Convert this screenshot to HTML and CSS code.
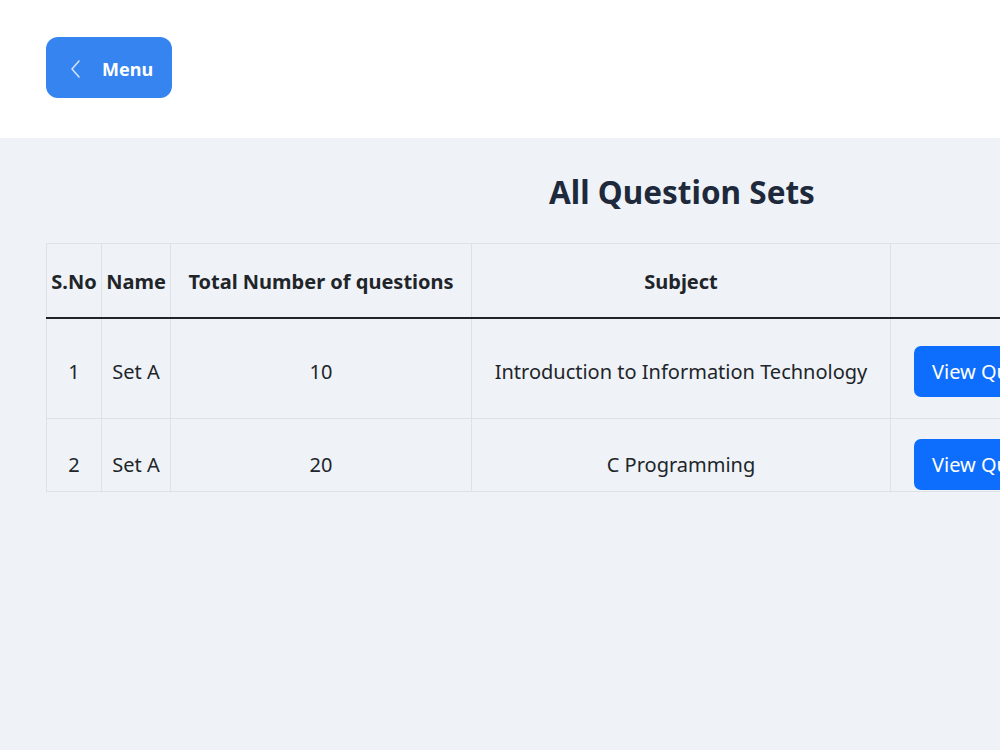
FILE: index.html
```html
<!DOCTYPE html>
<html lang="en">
<head>
    <meta charset="UTF-8">
    <meta name="viewport" content="width=device-width, initial-scale=1.0">
    <title>All Question Sets</title>
    <link rel="stylesheet" href="styles.css">
</head>
<body>
    <header class="topbar">
        <button class="menu-btn">
            <svg class="menu-icon" width="12" height="20" viewBox="0 0 12 20" fill="none">
                <path d="M9 2 L2 10 L9 18" stroke="currentColor" stroke-width="1.6" stroke-linecap="round" stroke-linejoin="round"/>
            </svg>
            <span>Menu</span>
        </button>
    </header>

    <main class="content">
        <h1 class="page-title">All Question Sets</h1>

        <table class="sets-table">
            <colgroup>
                <col class="col-sno">
                <col class="col-name">
                <col class="col-total">
                <col class="col-subject">
                <col class="col-actions">
            </colgroup>
            <thead>
                <tr>
                    <th>S.No</th>
                    <th>Name</th>
                    <th>Total Number of questions</th>
                    <th>Subject</th>
                    <th></th>
                </tr>
            </thead>
            <tbody>
                <tr class="row-tall">
                    <td>1</td>
                    <td>Set A</td>
                    <td>10</td>
                    <td>Introduction to Information Technology</td>
                    <td class="actions"><button class="view-btn">View Questions</button></td>
                </tr>
                <tr>
                    <td>2</td>
                    <td>Set A</td>
                    <td>20</td>
                    <td>C Programming</td>
                    <td class="actions"><button class="view-btn">View Questions</button></td>
                </tr>
            </tbody>
        </table>
    </main>
</body>
</html>
```

FILE: styles.css
```css
html {
    overflow-x: hidden;
}
body {
    margin: 0;
    font-family: "Noto Sans", "Open Sans", sans-serif;
    background-color: #eff3f8;
    color: #212529;
    min-height: 100vh;
}
.topbar {
    background-color: #fff;
    height: 138px;
    padding: 37px 46px 0;
    box-sizing: border-box;
}
.menu-btn {
    display: flex;
    align-items: center;
    gap: 20px;
    height: 61px;
    width: 126px;
    padding: 3px 0 0 24px;
    font-family: inherit;
    font-size: 18px;
    font-weight: 700;
    color: #fff;
    background-color: #3584f0;
    border: none;
    border-radius: 12px;
    cursor: pointer;
}
.menu-icon {
    color: #cfe1fb;
}
.content {
    width: 1272px;
    padding: 0 46px 40px;
}
.page-title {
    margin: 0;
    padding: 32px 0 29px;
    text-align: center;
    font-size: 31.5px;
    font-weight: 700;
    line-height: 44px;
    color: #1e293b;
}
.sets-table {
    width: 1272px;
    table-layout: fixed;
    border-collapse: collapse;
    border: 1px solid #dee2e6;
    font-size: 20px;
}
.col-sno { width: 55px; }
.col-name { width: 69px; }
.col-total { width: 301px; }
.col-subject { width: 419px; }
.sets-table th,
.sets-table td {
    border: 1px solid #dee2e6;
    text-align: center;
    padding: 0 4px;
    line-height: 30px;
    vertical-align: baseline;
    white-space: nowrap;
}
.sets-table th {
    height: 71px;
    padding-top: 2px;
    vertical-align: middle;
    font-weight: 700;
}
.sets-table thead tr {
    border-bottom: 2px solid #212529;
}
.sets-table td.actions {
    text-align: left;
    padding: 20px 23px 1px;
}
.sets-table .row-tall td.actions {
    padding: 27px 23px 21px;
}
.view-btn {
    font-family: inherit;
    font-size: 20px;
    line-height: 29px;
    padding: 11px 18px;
    color: #fff;
    background-color: #0d6efd;
    border: none;
    border-radius: 7px;
    cursor: pointer;
}
```
